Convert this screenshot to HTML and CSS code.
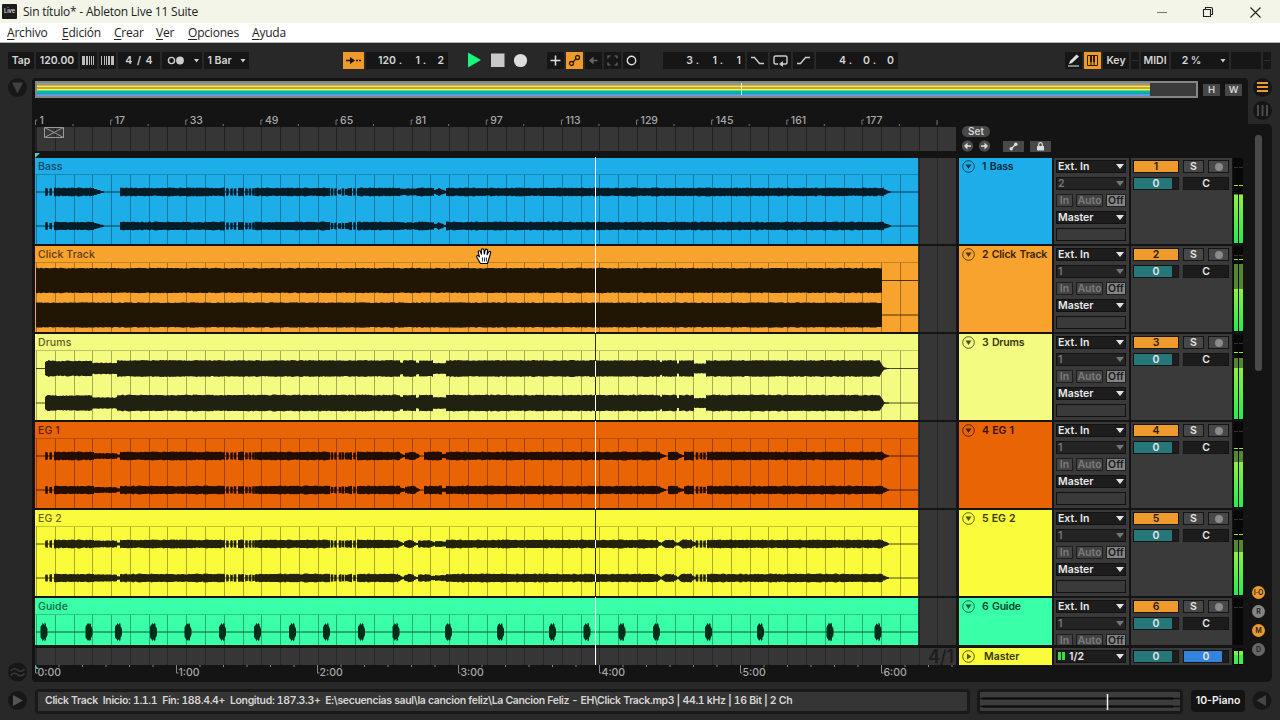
FILE: index.html
```html
<!DOCTYPE html>
<html lang="es">
<head>
<meta charset="utf-8">
<title>Sin título* - Ableton Live 11 Suite</title>
<link rel="stylesheet" href="styles.css">
</head>
<body>
<header class="titlebar">
	<span class="logo">Live</span>
	<span class="title">Sin título* - Ableton Live 11 Suite</span>
	<svg class="winbtns" width="110" height="22" fill="none" stroke="#222" stroke-width="1.1"><path d="M1 11.5h10" stroke="#777"/><path d="M47.500 8.500h7v7h-7zM49.500 8.500v-2h5.500q1.500 0 1.500 1.500v5.500h-2"/><path d="M94.500 6.500l10 10M104.500 6.500l-10 10"/></svg>
</header>
<nav class="menu">
	<a class="m1"><u>A</u>rchivo</a><a class="m2"><u>E</u>dición</a><a class="m3"><u>C</u>rear</a><a class="m4"><u>V</u>er</a><a class="m5"><u>O</u>pciones</a><a class="m6"><u>A</u>yuda</a>
</nav>

<div class="toolbar">
	<div class="group">
		<span class="ctl w26">Tap</span>
		<span class="ctl w42">120.00</span>
		<span class="ctl w17"><svg width="13" height="9" fill="#bbb"><path d="M0 0h3v9H0zM4 0h2v9H4zM7 0h1v9H7zM9 0h1v9H9zM11 0h1v9h-1z"/></svg></span>
		<span class="ctl w17"><svg width="13" height="9" fill="#bbb"><path d="M0 0h1v9H0zM3 0h1v9H3zM5 0h1v9H5zM7 0h2v9H7zM10 0h3v9h-3z"/></svg></span>
		<span class="ctl w42 sig">4 / 4</span>
		<span class="ctl w40"><svg width="36" height="11"><circle cx="7.500" cy="5.500" r="3.100" fill="none" stroke="#ccc" stroke-width="1.400"/><circle cx="16" cy="5.500" r="3.900" fill="#ccc"/><path d="M30 4h5l-2.500 3.500z" fill="#ccc"/></svg></span>
		<span class="ctl w45">1 Bar<svg width="14" height="8"><path d="M8.500 2h5L11 5.500z" fill="#ccc"/></svg></span>
	</div>
	<div class="group g-pos">
		<span class="ctl w21 on"><svg width="17" height="9"><path d="M1 4.500h5M11 4.500h2M14 4.500h2" stroke="#1b1206" stroke-width="1.300"/><path d="M5 1l5 3.500L5 8z" fill="#1b1206"/></svg></span>
		<span class="ctl w82 num"><i>120 .</i><i>1 .</i><i>2</i></span>
	</div>
	<div class="group g-play">
		<svg width="60" height="17"><path d="M0 0.500l13 7.500-13 7.500z" fill="#17f77d"/><path d="M23 1.500h13.500V15H23z" fill="#c9c9c9"/><circle cx="52.500" cy="8.500" r="6.600" fill="#dedede"/></svg>
	</div>
	<div class="group g-edit">
		<span class="ctl w17"><svg width="11" height="11"><path d="M5.500 0.500v10M0.500 5.500h10" stroke="#ddd" stroke-width="1.500"/></svg></span>
		<span class="ctl w17 on"><svg width="13" height="13" fill="none" stroke="#2a1b05" stroke-width="1.300"><circle cx="3.500" cy="9.500" r="2"/><circle cx="9.500" cy="3.500" r="2"/><path d="M5 8l3-3"/></svg></span>
		<span class="ctl w17"><svg width="11" height="9"><path d="M4.500 4.500H9.500" stroke="#666" stroke-width="1.600"/><path d="M5.500 0.500v8L1 4.500z" fill="#666"/></svg></span>
		<span class="ctl w17"><svg width="11" height="11"><path d="M1 3.500V1h2.500M7.500 1H10v2.500M10 7.500V10H7.500M3.500 10H1V7.500" fill="none" stroke="#6c6c6c" stroke-width="1.200"/></svg></span>
		<span class="ctl w17"><svg width="11" height="11"><circle cx="5.500" cy="5.500" r="4.200" fill="none" stroke="#ddd" stroke-width="1.400"/></svg></span>
	</div>
	<div class="group g-loop">
		<span class="ctl w82 num"><i>3 .</i><i>1 .</i><i>1</i></span>
		<span class="ctl w21"><svg width="15" height="9"><path d="M1 1.500h3.500l5 6H14" fill="none" stroke="#ccc" stroke-width="1.400"/></svg></span>
		<span class="ctl w21"><svg width="15" height="12"><path d="M5 9H2.500Q1 9 1 7.500V2.500Q1 1 2.500 1h10Q14 1 14 2.500v5Q14 9 12.500 9H9" fill="none" stroke="#ccc" stroke-width="1.400"/><path d="M10 6v6L6 9z" fill="#ccc"/></svg></span>
		<span class="ctl w21"><svg width="15" height="9"><path d="M1 7.500h3.500l5-6H14" fill="none" stroke="#ccc" stroke-width="1.400"/></svg></span>
		<span class="ctl w82 num"><i>4 .</i><i>0 .</i><i>0</i></span>
	</div>
	<div class="group g-right">
		<span class="ctl w17"><svg width="13" height="13"><path d="M1 12h11" stroke="#ccc" stroke-width="1.200"/><path d="M2 10l1-3 6.500-6.500 2.500 2L5 9z" fill="#ddd"/></svg></span>
		<span class="ctl w17 on"><svg width="11" height="11"><path d="M0.500 0.500h10v10H0.500zM4 6v4M7 6v4" fill="none" stroke="#2a1b05"/><path d="M3 0h2v7H3zM6 0h2v7H6z" fill="#2a1b05"/></svg></span>
		<span class="ctl w26">Key</span>
		<span class="ctl w8"><b class="led"></b></span>
		<span class="ctl w28">MIDI</span>
		<span class="ctl w58 cpu">2 %<svg width="8" height="8"><path d="M1.500 2h5L4 5.500z" fill="#ccc"/></svg></span>
		<span class="ctl w30"></span>
		<span class="ctl w8"><b class="led"></b></span>
	</div>
</div>

<div class="workspace">
	<aside class="left">
		<svg width="20" height="20"><circle cx="9.500" cy="9.500" r="9.500" fill="#171717"/><path d="M4 4.500h11l-5.500 11z" fill="#414141"/></svg>
		<svg width="20" height="20"><circle cx="9.500" cy="10" r="9.500" fill="#171717"/><path d="M2.500 9q3.500-4 7-1t7-1M2.500 13.500q3.500-4 7-1t7-1" fill="none" stroke="#3a3a3a" stroke-width="1.500"/></svg>
	</aside>
	<main class="panel">
		<div class="overview-row">
			<div class="overview"><div class="stripes"></div><b class="ov-head"></b></div>
			<span class="hw">H</span><span class="hw">W</span>
		</div>
		<div class="head">
			<div class="rulers">
				<svg id="bars" width="921" height="29"></svg>
				<div class="scrub"><svg width="20" height="11" fill="none" stroke="#999"><path d="M0.500 0.500h19v10H0.500zM0.500 0.500l19 10M19.500 0.500l-19 10"/></svg></div>
				<svg class="marker" width="5" height="5"><path d="M0 0h5L0 5z" fill="#5cc9bd"/></svg>
			</div>
			<div class="setbox">
				<span class="set">Set</span>
				<div class="setrow">
					<svg width="29" height="12"><circle cx="5.500" cy="6" r="5.700" fill="#4b4b4b"/><circle cx="22.500" cy="6" r="5.700" fill="#4b4b4b"/><path d="M4 6h5M19 6h5" stroke="#ddd" stroke-width="1.500"/><path d="M5.500 2.500v7L2 6zM22.500 2.500v7L26 6z" fill="#ddd"/></svg>
					<span class="sbtn"><svg width="9" height="9"><path d="M2 7l5-5" stroke="#ddd" stroke-width="1.300"/><circle cx="2.200" cy="6.800" r="1.700" fill="#ddd"/><circle cx="6.800" cy="2.200" r="1.700" fill="#ddd"/></svg></span>
					<span class="sbtn"><svg width="9" height="9"><path d="M1 4h7v4.500H1z" fill="#ddd"/><path d="M2.700 4V2.500a1.800 1.800 0 0 1 3.600 0V4" fill="none" stroke="#ddd" stroke-width="1.200"/></svg></span>
				</div>
			</div>
		</div>
		<div id="tracks"></div>
		<div class="track master">
			<div class="lane"><span class="zoomlabel">4/1</span></div>
			<div class="name yellow2"><svg width="13" height="13"><circle cx="6.500" cy="6.500" r="5.800" fill="none" stroke="#55560f"/><path d="M5 3.500v6l4.500-3z" fill="#55560f"/></svg>Master</div>
			<div class="io"><span class="drop"><em><b class="mini"></b><b class="mini"></b>1/2</em></span></div>
			<div class="mix"><div class="mixrow"><span class="vol">0</span><span class="cue">0</span></div></div>
			<svg class="meter" width="10" height="17"><path d="M1 3h4v13H1zM6 3h4v13H6z" fill="#7ef33a"/><path d="M1 7h4v9H1zM6 7h4v9H6z" fill="#3df04a"/></svg>
		</div>
		<svg id="time" width="921" height="17"></svg>
		<b class="playhead"></b>
		<svg class="hand" width="17" height="17"><path d="M4.500 15.500L1.500 10.500Q0 8 1.200 7.600 2.300 7.300 3.500 9.300L2.300 4.500Q2 3 3.200 2.800 4.300 2.700 4.700 4L5.500 6.500 5.300 2.200Q5.400 0.800 6.600 0.800 7.800 0.900 8 2.200L8.300 6.300 9.200 2Q9.600 0.900 10.700 1.200 11.700 1.500 11.500 2.800L11 7 12.600 4Q13.400 3 14.200 3.500 15 4 14.500 5.300L12.700 11.500 11.500 15.500z" fill="#fff" stroke="#000" stroke-width="1.100"/><path d="M6.500 9.500v4M8.500 9.500v4M10.400 9.500v4" stroke="#000" stroke-width=".8"/></svg>
	</main>
	<aside class="right">
		<div class="views">
			<svg width="20" height="20"><circle cx="10.500" cy="9.500" r="9.500" fill="#151515"/><path d="M5 5h11M5 9h11M5 13h11" stroke="#f09a28" stroke-width="2"/></svg>
			<svg width="20" height="20"><circle cx="10.500" cy="9.500" r="9.500" fill="#151515"/><path d="M6 4v11M10.500 4v11M15 4v11" stroke="#4a4a4a" stroke-width="2"/></svg>
		</div>
		<div class="scroll">
			<b class="thumb"></b>
			<span class="dot amber">I·O</span><span class="dot">R</span><span class="dot amber">M</span><span class="dot dim">D</span>
		</div>
	</aside>
</div>

<footer class="status">
	<svg class="circ" width="20" height="20"><circle cx="9.500" cy="9.500" r="9.500" fill="#171717"/><path d="M5 4v11l10-5.500z" fill="#555"/></svg>
	<div class="info"><span>Click Track&nbsp; Inicio: 1.1.1&nbsp; Fín: 188.4.4+&nbsp; Longitud: 187.3.3+&nbsp; E:\secuencias saul\la cancion feliz\La Cancion Feliz - EH\Click Track.mp3 | 44.1 kHz | 16 Bit | 2 Ch</span></div>
	<div class="clipview"><svg width="200" height="19"><path d="M0 6.500h200M0 14.500h200" stroke="#111" stroke-width="1.500"/><path d="M3 6.500h190M3 14.500h190" stroke="#0b0b0b" stroke-width="2"/><path d="M127.500 2v16" stroke="#eee" stroke-width="1.500"/></svg></div>
	<div class="device">10-Piano</div>
	<svg class="circ" width="20" height="20"><circle cx="10" cy="9.500" r="9.500" fill="#171717"/><path d="M14 4v11L4.500 9.500z" fill="#444"/></svg>
</footer>
<script src="tracks.js"></script>
</body>
</html>
```
FILE: styles.css
```css
*{box-sizing:border-box;}
body{margin:0;width:1280px;height:720px;overflow:hidden;background:#282828;color:#d4d4d4;font:600 10.5px/13px Inter, "Open Sans", sans-serif;}
svg{display:block;flex:none;}
i,em{font-style:normal;}

/* window */
.titlebar{display:flex;align-items:center;height:23px;background:#f2f5e8;color:#222;font:400 12px/22px "Open Sans", "Noto Sans", sans-serif;padding-left:2px;}
.logo{width:15px;height:15px;background:#1c1c1c;color:#ddd;font:600 5.5px/15px Inter, sans-serif;text-align:center;border-radius:1px;}
.title{margin-left:6px;letter-spacing:-.22px;}
.winbtns{margin-left:auto;margin-right:14px;}
.menu{display:flex;height:20px;background:#fff;color:#222;border-bottom:1px solid #b5b5b5;font:400 12px/20px "Open Sans", "Noto Sans", sans-serif;padding-left:7px;letter-spacing:-.2px;}
.menu u{text-underline-offset:2px;}
.m1{width:55px;}
.m2{width:52px;}
.m3{width:42px;}
.m4{width:32px;}
.m5{width:64px;}

/* toolbar */
.toolbar{display:flex;height:35px;padding:9px 9px 0 8px;}
.group{display:flex;gap:2px;height:17px;}
.g-pos{margin-left:94px;}
.g-play{margin-left:20px;}
.g-edit{margin-left:19px;}
.g-loop{margin-left:23px;}
.g-right{margin-left:auto;}
.ctl{display:flex;align-items:center;justify-content:center;height:17px;background:#161616;white-space:nowrap;}
.on{background:#ee9b2c;}
.w8{width:8px;}
.w17{width:17px;}
.w21{width:21px;}
.w26{width:26px;}
.w28{width:28px;}
.w30{width:30px;}
.w40{width:40px;}
.w42{width:42px;}
.w45{width:45px;}
.w58{width:58px;}
.w82{width:82px;}
.sig{word-spacing:2px;}
.num{justify-content:flex-end;padding-right:4px;}
.num i{width:24px;text-align:right;white-space:pre;}
.num i:first-child{width:34px;}
.num i:last-child{width:18px;}
.cpu{gap:18px;padding-left:9px;}
.led{width:6px;height:1px;background:#303030;}

/* workspace */
.workspace{display:flex;height:604px;}
.left{width:32px;padding:0 0 0 8px;display:flex;flex-direction:column;justify-content:space-between;}
.panel{position:relative;width:1216px;background:#141414;padding:3px 0 0 3px;border-radius:4px 4px 0 4px;}
.overview-row{display:flex;align-items:center;height:17px;}
.overview{position:relative;width:1163px;height:17px;border:2px solid #858585;background:#3b3b3b;margin-right:5px;}
.stripes{width:1113px;height:13px;background:linear-gradient(#8a9e8c 0 2px,#e8a530 2px 3px,#e8ec80 3px 4px,#d5a324 4px 6px,#f5fa50 6px 7px,#39e98c 7px 8px,#12b596 8px 10px,#1a94c8 10px 11px,#589ee0 11px);}
.ov-head{position:absolute;left:704px;top:0;width:1px;height:12px;background:#e4f3cf;}
.hw{width:17px;height:12px;margin-right:5px;background:#474747;text-align:center;font-size:9.5px;line-height:12px;}
.head{display:flex;height:58px;}
.rulers{width:921px;}
.scrub{width:921px;height:24px;background:repeating-linear-gradient(90deg,#222 0 1px,transparent 1px 18.78px) 1px 0,#363636;padding-left:9px;}
.marker{margin-top:2px;}
.rule text{fill:#a8a8a8;font-size:10.5px;font-weight:500;}
.setbox{padding:28px 0 0 6px;}
.set{display:block;width:28px;height:11px;border-radius:6px;background:#484848;text-align:center;font-size:10px;line-height:11px;}
.setrow{display:flex;align-items:center;height:12px;margin-top:3px;}
.sbtn{width:21px;height:11px;background:#484848;display:flex;align-items:center;justify-content:center;margin-left:6px;}
.setrow svg+.sbtn{margin-left:12px;}

/* tracks */
.track{display:flex;height:88px;padding-top:2px;overflow:hidden;}
.track.short{height:49px;}
.track.master{height:20px;padding-top:3px;}
.lane{position:relative;width:921px;background:repeating-linear-gradient(90deg,#272727 0 1px,transparent 1px 18.78px) 1px 0,#363636;margin-right:3px;}
.clip{width:883px;height:100%;font-weight:500;font-size:10.5px;}
.cliptitle{height:17px;padding:2px 0 0 3px;border-bottom:1px solid rgba(0,0,0,.22);letter-spacing:.1px;}
.cliptitle span{opacity:.8;}
.wavebox{background:repeating-linear-gradient(90deg,rgba(0,0,0,.32) 0 1px,transparent 1px 18.78px) 1px 0;}
.blue{background:#1dade8;color:#022b3c;}
.orange{background:#f7a32e;color:#392204;}
.lime{background:#f3fb80;color:#35370c;}
.rust{background:#e96404;color:#310f00;}
.yellow2{background:#fafb3b;color:#363706;}
.green{background:#38ffa8;color:#034429;}
.name{width:93px;padding:2px 0 0 3px;display:flex;gap:7px;margin-right:2px;white-space:nowrap;letter-spacing:-.2px;word-spacing:1px;}
.io{width:75px;background:#3a3a3a;padding:2px 3px 0 2px;display:flex;flex-direction:column;gap:4px;margin-right:2px;}
.drop,.slot{display:flex;justify-content:space-between;align-items:center;width:70px;height:13px;flex:none;background:#1d1d1d;border:1px solid #111;padding:0 1px 0 1px;color:#e8e8e8;}
.drop::after{content:"";border:4px solid transparent;border-top:5px solid #e4e4e4;border-bottom:0;}
.drop.off{color:#777;background:#242424;}
.drop.off::after{border-top-color:#777;}
.slot{background:#3a3a3a;}
.mon{display:flex;gap:3px;flex:none;}
.mon span{height:13px;width:17px;border:1px solid #1d1d1d;background:#444;color:#7b7b7b;text-align:center;line-height:11px;}
.mon span:nth-child(2){width:27px;}
.mon span:nth-child(3){width:20px;background:#858585;color:#1a1a1a;}
.mix{width:101px;background:#3a3a3a;padding:2px 0 0 2px;display:flex;flex-direction:column;gap:4px;}
.mixrow{display:flex;gap:4px;}
.mixrow span{height:13px;border:1px solid #151515;text-align:center;line-height:11px;color:#e2e2e2;}
.act,.vol,.pan,.cue{width:46px;}
.mixrow .act{background:#ee9b2c;color:#2b1a02;}
.vol{background:linear-gradient(90deg,#25777a 38px,#1d1d1d 38px);}
.cue{background:linear-gradient(90deg,#3483dc 38px,#1d1d1d 38px);}
.pan{background:#1c1c1c;}
.solo,.arm{width:21px;background:#484848;}
.arm{display:flex;align-items:center;justify-content:center;}
.arm::after{content:"";width:8px;height:8px;border-radius:4px;background:#8b8b8b;}
.meter{background:#080808;margin-left:1px;}
.mini{display:inline-block;width:3px;height:8px;background:#3cdc4a;margin-right:1px;}
.mini+.mini{margin-right:4px;}
.master .name{gap:9px;letter-spacing:0;}
.zoomlabel{position:absolute;right:2px;top:0;color:#1c1c1c;font:500 18px/17px Inter, sans-serif;}
.playhead{position:absolute;left:563px;top:79px;width:1px;height:508px;background:linear-gradient(#fff 176px,#2d2e17 176px 204px,#fff 204px 220px,#2d2e17 220px 238px,#fff 238px 254px,#2d2e17 254px 264px,#fff 264px 352px,#2d2e17 352px 383px,#fff 383px 391px,#2d2e17 391px 417px,#fff 417px 425px,#2d2e17 425px 440px,#fff 440px);}
.hand{position:absolute;left:444px;top:170px;}

/* right side */
.right{width:32px;display:flex;flex-direction:column;}
.views{height:46px;padding-left:4px;display:flex;flex-direction:column;gap:3px;}
.scroll{width:24px;height:558px;background:#141414;border-radius:0 5px 5px 0;padding:11px 0 0 4px;}
.thumb{display:block;width:7px;height:236px;margin:0 0 215px 3px;border-radius:3px;background:#4a4a4a;}
.dot{display:block;width:13px;height:13px;border-radius:7px;background:#858585;color:#222;font-size:7px;line-height:13px;text-align:center;margin-bottom:6px;}
.dot.amber{background:#ee9b2c;}
.dot.dim{background:#676767;}

/* status */
.status{display:flex;align-items:center;height:38px;padding-left:8px;}
.info{width:935px;height:25px;margin-left:7px;border:3px solid #191919;border-radius:4px;background:#353535;padding-left:7px;line-height:18px;white-space:nowrap;}
.info span{letter-spacing:-.35px;font-feature-settings:"tnum";}
.clipview{width:206px;height:25px;margin-left:7px;border:3px solid #191919;border-radius:4px;background:#3d3d3d;}
.device{width:54px;height:22px;margin-left:8px;background:#131313;border-radius:4px;text-align:center;line-height:22px;color:#eee;}
.device+.circ{margin-left:7px;}
```
FILE: tracks.js
```js
// each wave segment: [x start, x end, half height at start, half height at end]
var burst = function(list, h){
	return list.map(function(x){ return [x-1.3, x+1.3, h, h]; });
};

var bass = [[54,94,4,4],[94,104,3,.5],[120,225,4,4],[238,244,4,4],[255,330,4,4],[338,341,2,3],[345,352,3,4],[357,400,4,4],[400,418,3.5,3.5],[418,434,4,4],[434,438,2,3],[438,446,4,.6],[446,884,4,4],[884,891,3,.5]]
	.concat(burst([46.5,50.7,227.5,231.5,235,246.5,250,253.5,332,335.5,343,354.5],3.5));
var eg = [[54,94,4,4],[94,117,2.7,2.7],[117,120,1.5,1.5],[120,225,4,4],[238,244,4,4],[255,330,4,4],[345,352,3,4],[357,400,4,4],[400,405,3,1],[405,414,3,4],[414,420,4,1],[424,442,4,4],[442,446,2,2],[446,660,4,4],[660,666,3,.6],[668,678,4,4],[678,684,3,.6],[684,694,4,4],[707,883,4,4],[883,889,3,.5]]
	.concat(burst([46.5,50.7,227.5,231.5,235,246.5,250,253.5,332,335.5,340,343,354.5,697,701,704.5],3.5));
var eg2 = [[54,94,4,4],[94,117,3.3,3.3],[117,120,1.5,1.5],[120,225,4,4],[238,244,4,4],[255,330,4,4],[345,352,3,4],[357,398,4,4],[398,404,3.5,1],[404,409,2,4],[409,414,4,3],[414,418,2,1],[418,430,3.5,3.5],[430,435,3,1.5],[435,446,2.7,2.7],[446,658,4,4],[658,662,3,1],[662,666,2,4],[666,674,4,4],[674,678,3,1],[678,682,1,4],[682,692,4,4],[692,696,3,1],[707,883,4,4],[883,889,3,.5]]
	.concat(burst([46.5,50.7,227.5,231.5,235,246.5,250,253.5,332,335.5,340,343,354.5,697,701,704.5],3.5));
var drums = [[45,48,6,8],[48,62,8,7],[62,92,7.5,7.5],[92,117,5.5,5.5],[117,400,8,8],[400,403,6,6],[403,416,8,8],[416,419,5.5,5.5],[419,433,8,8],[433,446,5.5,5.5],[446,660,8,8],[660,662,6.5,6.5],[662,677,8,8],[677,679,5,5],[679,694,8,8],[694,706,5,5],[706,880,8,8],[880,884,7,1.5],[884,889,1,.5]];
var guide = [44,89,118.5,153.5,188,222.5,257.5,292.5,326.5,361.5,396,448.5,500.5,552.5,587,622,656.5,708.5,760.5,830,878].reduce(function(a, x){
	return a.concat([[x-3.5,x-1.5,5,8],[x-1.5,x+.5,9,7],[x+.5,x+2,9,8],[x+2,x+3.5,6,3]]);
}, []);

var tracks = [
	{name:'Bass', color:'blue', ink:'#021d28', input:2, segs:bass, rows:[16.5,50.5], peak:27, dim:36, fill:37},
	{name:'Click Track', color:'orange', ink:'#201603', input:1, segs:[[36,882,12.3,12.3]], rows:[17,51.5], peak:13, dim:18, fill:43},
	{name:'Drums', color:'lime', ink:'#202110', input:1, segs:drums, rows:[17,51.5], peak:18, dim:24, fill:34},
	{name:'EG 1', color:'rust', ink:'#230d01', input:1, segs:eg, rows:[16.5,50.5], peak:26, dim:29, fill:40},
	{name:'EG 2', color:'yellow2', ink:'#22230a', input:1, segs:eg2, rows:[16.5,50.5], peak:24, dim:30, fill:42},
	{name:'Guide', color:'green', ink:'#032d1b', input:1, segs:guide, rows:[16.5], peak:0, short:true}
];

function wavePath(segs, cy, seed){
	var d = '';
	segs.forEach(function(s){
		var top = [], bottom = [], len = s[1] - s[0];
		var steps = Math.max(2, Math.round(len / 1.5));
		for(var k = 0; k <= steps; k++){
			seed = (seed * 1103 + 377) % 7919;
			var x = s[0] + len * k/steps;
			var h = s[2] + .4 + (s[3]-s[2]) * k/steps - (seed % 10)/12;
			h = Math.max(h, .4);
			top.push(x.toFixed(1) + ' ' + (cy-h).toFixed(1));
			bottom.unshift(x.toFixed(1) + ' ' + (cy+h).toFixed(1));
		}
		d += 'M' + top.concat(bottom).join('L') + 'z';
	});
	return d;
}

function wave(t){
	var h = t.short ? 30 : 69;
	var out = '<svg class="wavebox" width="883" height="' + h + '" viewBox="35 0 883 ' + h + '">';
	t.rows.forEach(function(cy, i){
		out += '<path d="M36 ' + (cy+.5) + 'H918" stroke="' + t.ink + '" stroke-width=".8"/><path fill="' + t.ink + '" d="' + wavePath(t.segs, cy+.5, 91+i) + '"/>';
	});
	return out + '</svg>';
}

function meter(t){
	var h = t.short ? 47 : 86, out = '<svg class="meter" width="10" height="' + h + '"><defs><linearGradient id="mg" x2="0" y2="1"><stop stop-color="#8df23c"/><stop offset="1" stop-color="#22ee50"/></linearGradient></defs>';
	[1, 6].forEach(function(x){
		out += '<rect x="' + x + '" y="9" width="4" height="1" fill="#333"/>';
		if(t.fill){
			out += '<rect x="' + x + '" y="' + t.peak + '" width="4" height="1" fill="#9be83c"/>' +
				'<rect x="' + x + '" y="' + t.dim + '" width="4" height="' + (85-t.dim) + '" fill="#55882c"/>' +
				'<rect x="' + x + '" y="' + t.fill + '" width="4" height="' + (85-t.fill) + '" fill="url(#mg)"/>';
		}
	});
	return out + '</svg>';
}

document.getElementById('tracks').innerHTML = tracks.map(function(t, i){
	var n = i + 1;
	return '<div class="track' + (t.short ? ' short' : '') + '">' +
		'<div class="lane"><div class="clip ' + t.color + '"><div class="cliptitle"><span>' + t.name + '</span></div>' + wave(t) + '</div></div>' +
		'<div class="name ' + t.color + '"><svg width="13" height="13"><circle cx="6.500" cy="6.500" r="5.800" fill="none" stroke="' + t.ink + '" opacity=".7"/><path d="M3.500 4.500h6l-3 4.500z" fill="' + t.ink + '" opacity=".8"/></svg>' + n + ' ' + t.name + '</div>' +
		'<div class="io"><span class="drop">Ext. In</span><span class="drop off">' + t.input + '</span><div class="mon"><span>In</span><span>Auto</span><span>Off</span></div>' +
		(t.short ? '' : '<span class="drop">Master</span><span class="slot"></span>') + '</div>' +
		'<div class="mix"><div class="mixrow"><span class="act">' + n + '</span><span class="solo">S</span><span class="arm"></span></div><div class="mixrow"><span class="vol">0</span><span class="pan">C</span></div></div>' +
		meter(t) + '</div>';
}).join('');

// bar ruler on top, 16 bars per label
var bars = '';
for(var i = 0; i < 13; i++){
	var x = .5 + i * 75.13;
	bars += '<path d="M' + x + ' 27v-5' + (i < 12 ? 'h2' : '') + '" fill="none" stroke="#777"/>';
	if(i < 12) bars += '<path d="M' + (x+37.5) + ' 26v2" stroke="#777"/><text x="' + (x+4) + '" y="26">' + (1+i*16) + '</text>';
}
var el = document.getElementById('bars');
el.setAttribute('class', 'rule');
el.innerHTML = bars;

// minutes ruler below
var time = '<path d="M0 0l4 4H0z" fill="#53c6cf"/>';
for(var m = 0; m < 40; m++){
	var tx = .5 + m * 23.5;
	time += '<path d="M' + tx + ' 0v' + (m % 6 ? '2' : '8h2') + '" fill="none" stroke="#888"/>';
	if(m % 6 == 0 && m < 37) time += '<text x="' + (tx+2) + '" y="11">' + (m/6) + ':00</text>';
}
el = document.getElementById('time');
el.setAttribute('class', 'rule');
el.innerHTML = time;
```
